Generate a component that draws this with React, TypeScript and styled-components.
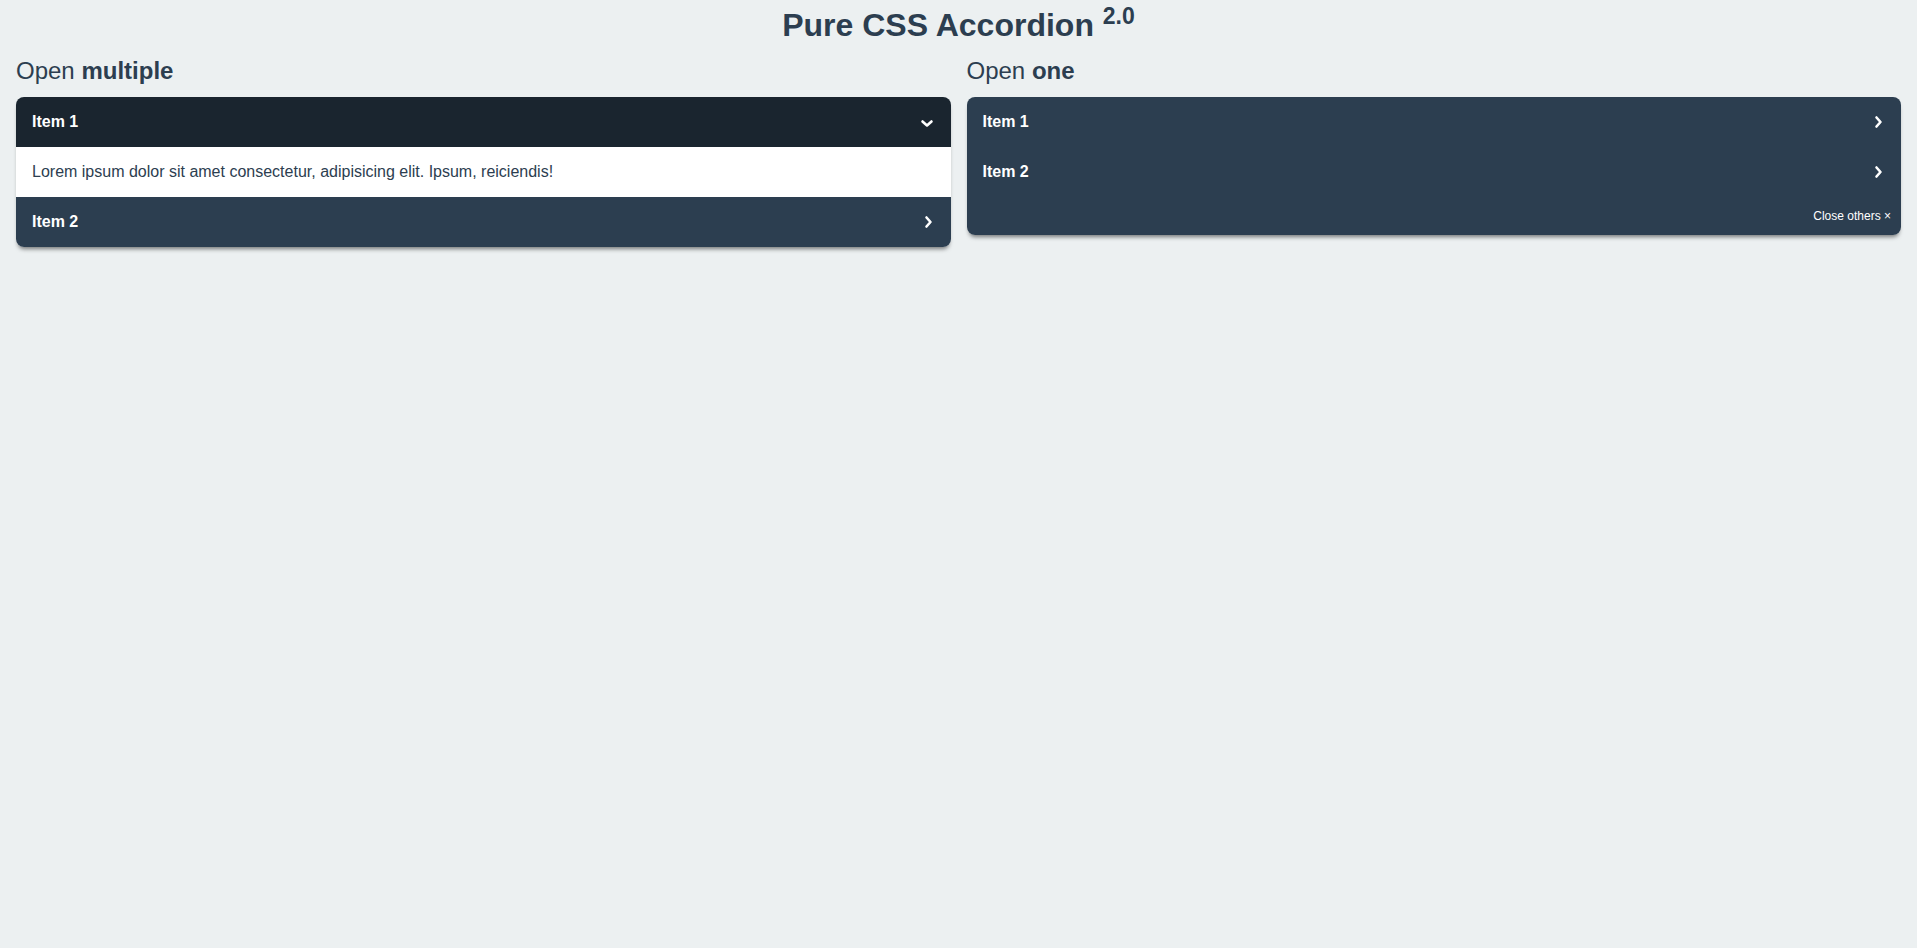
import React from "react";
import styled, { createGlobalStyle } from "styled-components";

const midnight = "#2c3e50";
const midnightDark = "#1a252f";

const GlobalStyle = createGlobalStyle`
  html, body {
    margin: 0;
    background: #ecf0f1;
  }
  body {
    color: ${midnight};
    font-family: "Liberation Sans", Arial, "DejaVu Sans", sans-serif;
    font-size: 16px;
    padding: 0 16px 16px;
  }
  * { box-sizing: border-box; }
`;

const Title = styled.h1`
  margin: -1px 0 0;
  font-size: 32px;
  font-weight: bold;
  line-height: 1.5;
  text-align: center;
`;

const Sup = styled.sup`
  font-size: 23px;
`;

const Row = styled.div`
  display: flex;
  gap: 16px;
`;

const Col = styled.div`
  flex: 1;
  min-width: 0;
`;

const Heading = styled.h2`
  margin: 8px 0 13px;
  font-size: 24px;
  font-weight: normal;
  line-height: 1.15;
`;

const Tabs = styled.div`
  border-radius: 8px;
  overflow: hidden;
  box-shadow: 0 4px 4px -2px rgba(0, 0, 0, 0.5);
`;

const Tab = styled.div`
  width: 100%;
  color: white;
  overflow: hidden;
`;

const Label = styled.div<{ $open?: boolean }>`
  display: flex;
  justify-content: space-between;
  align-items: center;
  padding: 16px;
  background: ${(p) => (p.$open ? midnightDark : midnight)};
  font-weight: bold;
  line-height: 18px;
  cursor: pointer;
`;

const Chevron = styled.svg<{ $open?: boolean }>`
  width: 16px;
  height: 16px;
  display: block;
  transform: ${(p) => (p.$open ? "rotate(90deg)" : "none")};
`;

const Content = styled.div`
  padding: 16px;
  color: ${midnight};
  background: white;
  line-height: 18px;
`;

const Close = styled.div`
  display: flex;
  justify-content: flex-end;
  padding: 12px 10px 12px 12px;
  font-size: 12px;
  line-height: 14px;
  background: ${midnight};
  color: white;
  cursor: pointer;
`;

const Item = ({ label, open, children }: { label: string; open?: boolean; children?: React.ReactNode }) => (
  <Tab>
    <Label $open={open}>
      <span>{label}</span>
      <Chevron $open={open} viewBox="0 0 16 16">
        <polyline
          points="7.5,3.5 11.5,8 7.5,12.5"
          fill="none"
          stroke="white"
          strokeWidth="2.6"
          strokeLinecap="round"
          strokeLinejoin="round"
        />
      </Chevron>
    </Label>
    {open && <Content>{children}</Content>}
  </Tab>
);

export default function App() {
  return (
    <>
      <GlobalStyle />
      <Title>
        Pure CSS Accordion <Sup>2.0</Sup>
      </Title>
      <Row>
        <Col>
          <Heading>
            Open <b>multiple</b>
          </Heading>
          <Tabs>
            <Item label="Item 1" open>
              Lorem ipsum dolor sit amet consectetur, adipisicing elit. Ipsum, reiciendis!
            </Item>
            <Item label="Item 2" />
          </Tabs>
        </Col>
        <Col>
          <Heading>
            Open <b>one</b>
          </Heading>
          <Tabs>
            <Item label="Item 1" />
            <Item label="Item 2" />
            <Close>Close others &times;</Close>
          </Tabs>
        </Col>
      </Row>
    </>
  );
}
